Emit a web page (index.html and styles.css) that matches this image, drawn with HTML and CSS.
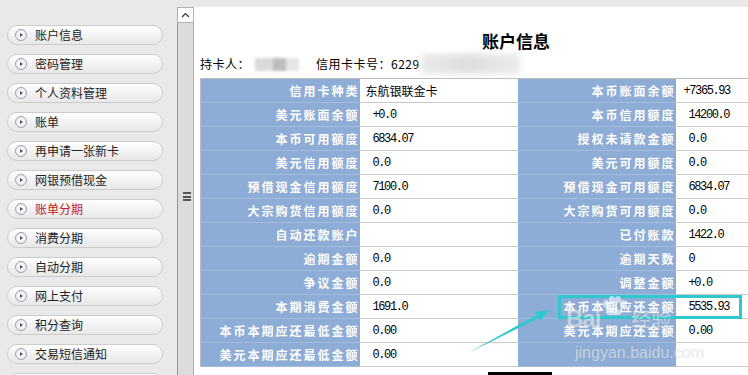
FILE: index.html
```html
<!DOCTYPE html>
<html>
<head>
    <link rel="stylesheet" href="styles.css">
</head>
<body>
    <div class="page">
        <div class="sidebar">
            <div class="menu-item"><span class="dot"></span>账户信息</div>
            <div class="menu-item"><span class="dot"></span>密码管理</div>
            <div class="menu-item"><span class="dot"></span>个人资料管理</div>
            <div class="menu-item"><span class="dot"></span>账单</div>
            <div class="menu-item"><span class="dot"></span>再申请一张新卡</div>
            <div class="menu-item"><span class="dot"></span>网银预借现金</div>
            <div class="menu-item active"><span class="dot"></span>账单分期</div>
            <div class="menu-item"><span class="dot"></span>消费分期</div>
            <div class="menu-item"><span class="dot"></span>自动分期</div>
            <div class="menu-item"><span class="dot"></span>网上支付</div>
            <div class="menu-item"><span class="dot"></span>积分查询</div>
            <div class="menu-item"><span class="dot"></span>交易短信通知</div>
            <div class="menu-item"><span class="dot"></span></div>
        </div>
        <div class="gutter">
            <div class="scroll-up">
                <svg width="9" height="6" viewBox="0 0 9 6"><path d="M1 5 L4.5 1.5 L8 5" fill="none" stroke="#333" stroke-width="1.2"/></svg>
            </div>
            <div class="grip"><span></span><span></span><span></span></div>
        </div>
        <div class="content">
            <div class="title">账户信息</div>
            <div class="holder">
                <span>持卡人：</span><span class="blur-name"></span><span class="card-no">信用卡卡号：6229</span><span class="blur-num"></span>
            </div>
            <table class="info">
                <colgroup>
                    <col style="width: 159px"><col style="width: 158px"><col style="width: 158px"><col style="width: 157px">
                </colgroup>
                <tr><td class="lbl">信用卡种类</td><td class="val">东航银联金卡</td><td class="lbl">本币账面余额</td><td class="val num first">+7365.93</td></tr>
                <tr><td class="lbl">美元账面余额</td><td class="val num">+0.0</td><td class="lbl">本币信用额度</td><td class="val num">14200.0</td></tr>
                <tr><td class="lbl">本币可用额度</td><td class="val num">6834.07</td><td class="lbl">授权未请款金额</td><td class="val num">0.0</td></tr>
                <tr><td class="lbl">美元信用额度</td><td class="val num">0.0</td><td class="lbl">美元可用额度</td><td class="val num">0.0</td></tr>
                <tr><td class="lbl">预借现金信用额度</td><td class="val num">7100.0</td><td class="lbl">预借现金可用额度</td><td class="val num">6834.07</td></tr>
                <tr><td class="lbl">大宗购货信用额度</td><td class="val num">0.0</td><td class="lbl">大宗购货可用额度</td><td class="val num">0.0</td></tr>
                <tr><td class="lbl">自动还款账户</td><td class="val"></td><td class="lbl">已付账款</td><td class="val num">1422.0</td></tr>
                <tr><td class="lbl">逾期金额</td><td class="val num">0.0</td><td class="lbl">逾期天数</td><td class="val num">0</td></tr>
                <tr><td class="lbl">争议金额</td><td class="val num">0.0</td><td class="lbl">调整金额</td><td class="val num">+0.0</td></tr>
                <tr><td class="lbl">本期消费金额</td><td class="val num">1691.0</td><td class="lbl">本币本期应还金额</td><td class="val num">5535.93</td></tr>
                <tr><td class="lbl">本币本期应还最低金额</td><td class="val num">0.00</td><td class="lbl">美元本期应还金额</td><td class="val num">0.00</td></tr>
                <tr><td class="lbl">美元本期应还最低金额</td><td class="val num">0.00</td><td class="lbl"></td><td class="val"></td></tr>
            </table>
        </div>
    </div>

    <div class="highlight"></div>
    <svg class="arrow" width="748" height="375" viewBox="0 0 748 375">
        <polygon points="468,353 538.4,318.1 539.9,320.9 550,310 535.3,312.1 536.8,314.9" fill="#2ec9cf"/>
    </svg>
    <div class="watermark">
        <div class="wm-logo"><span class="wm-bai">Bai</span><svg class="wm-paw" width="26" height="20" viewBox="0 0 26 20"><ellipse cx="5" cy="8" rx="3" ry="4"/><ellipse cx="11" cy="3.5" rx="3" ry="3.5"/><ellipse cx="17" cy="3.5" rx="3" ry="3.5"/><ellipse cx="22" cy="8" rx="3" ry="4"/><path d="M8 19 C4 19 6 13 13 11 C20 13 22 19 18 19 Z"/></svg><span class="wm-jy">经验</span></div>
        <div class="wm-url">jingyan.baidu.com</div>
    </div>
    <div class="hbar"></div>
</body>
</html>
```

FILE: styles.css
```css
body {
    margin: 0;
    background-color: rgb(233, 233, 233);
    font-family: "Noto Sans CJK SC", "Noto Sans", sans-serif;
    overflow: hidden;
    width: 748px;
    height: 375px;
    position: relative;
}
.page {
    display: flex;
    height: 375px;
}
.sidebar {
    width: 177px;
    flex: none;
    padding-top: 25px;
    box-sizing: border-box;
}
.menu-item {
    display: flex;
    align-items: center;
    margin-left: 7px;
    margin-bottom: 9px;
    width: 156px;
    height: 20px;
    box-sizing: border-box;
    border: 1px solid rgb(204, 204, 204);
    border-radius: 10px;
    background: linear-gradient(rgb(255, 255, 255), rgb(240, 240, 240) 60%, rgb(232, 232, 232));
    font-size: 12px;
    line-height: 18px;
    color: rgb(34, 34, 34);
}
.menu-item.active {
    color: rgb(196, 32, 38);
}
.dot {
    position: relative;
    width: 10px;
    height: 10px;
    margin-left: 7px;
    margin-right: 8px;
    border: 1px solid rgb(160, 158, 180);
    border-radius: 50%;
    background: radial-gradient(rgb(255, 255, 255), rgb(230, 230, 236));
    flex: none;
}
.dot::after {
    content: "";
    position: absolute;
    left: 4px;
    top: 2.5px;
    border-left: 3px solid rgb(80, 80, 90);
    border-top: 2.5px solid transparent;
    border-bottom: 2.5px solid transparent;
}
.gutter {
    width: 17px;
    flex: none;
    margin-top: 7px;
    box-sizing: border-box;
    border-left: 1px solid rgb(150, 150, 150);
    border-right: 1px solid rgb(176, 176, 176);
    background-color: rgb(220, 220, 220);
}
.scroll-up {
    height: 16px;
    margin-left: -1px;
    margin-right: -1px;
    border: 1px solid rgb(176, 176, 176);
    box-sizing: border-box;
    background-color: rgb(255, 255, 255);
    display: flex;
    align-items: center;
    justify-content: center;
}
.grip {
    margin-top: 169px;
    margin-left: 5px;
    width: 8px;
}
.grip span {
    display: block;
    height: 2px;
    margin-bottom: 1.5px;
    background-color: rgb(85, 85, 85);
}
.content {
    width: 638px;
    flex: none;
    margin-top: 7px;
    background-color: rgb(255, 255, 255);
    padding-left: 6px;
    box-sizing: border-box;
}
.title {
    text-align: center;
    font-size: 17px;
    font-weight: bold;
    line-height: 20px;
    padding-top: 24px;
    color: rgb(0, 0, 0);
}
.holder {
    margin-top: 5px;
    height: 16px;
    font-size: 12px;
    line-height: 16px;
    display: flex;
    align-items: center;
    letter-spacing: 0.5px;
    color: rgb(0, 0, 0);
}
.blur-name {
    display: inline-block;
    width: 44px;
    height: 13px;
    margin-left: 5px;
    background: linear-gradient(90deg, rgb(218, 218, 218) 0, rgb(218, 218, 218) 40%, rgb(188, 188, 188) 40%, rgb(188, 188, 188) 70%, rgb(230, 230, 230) 70%);
    filter: blur(1.5px);
}
.card-no {
    margin-left: 17px;
}
.blur-num {
    display: inline-block;
    width: 98px;
    height: 20px;
    margin-left: 2px;
    background: linear-gradient(90deg, rgb(232, 232, 232), rgb(222, 222, 222) 50%, rgb(236, 236, 236));
    filter: blur(3px);
}
.info {
    margin-top: 6px;
    width: 632px;
    table-layout: fixed;
    border-collapse: collapse;
    border: 1px solid rgb(188, 188, 188);
}
.info td {
    height: 23px;
    padding: 0;
    font-size: 12px;
    white-space: nowrap;
    overflow: hidden;
}
.lbl {
    background-color: rgb(141, 173, 214);
    color: rgb(255, 255, 255);
    font-weight: bold;
    text-align: right;
    letter-spacing: 2px;
    border-bottom: 1px solid rgb(163, 189, 222);
}
.val {
    background-color: rgb(255, 255, 255);
    color: rgb(0, 0, 0);
    padding-left: 6px !important;
    border-bottom: 1px solid rgb(200, 200, 200);
}
.num {
    font-family: "Liberation Mono", monospace;
    letter-spacing: -1.4px;
    padding-left: 13px !important;
}
.num.first {
    padding-left: 8px !important;
}
.highlight {
    position: absolute;
    left: 558px;
    top: 295px;
    width: 184px;
    height: 24px;
    box-sizing: border-box;
    border: 3px solid rgb(46, 201, 207);
}
.arrow {
    position: absolute;
    left: 0;
    top: 0;
}
.watermark {
    position: absolute;
    left: 566px;
    top: 294px;
    color: rgba(255, 255, 255, 0.55);
    text-shadow: 0 0 1px rgba(120, 120, 120, 0.3);
}
.wm-logo {
    display: flex;
    align-items: flex-end;
    height: 38px;
}
.wm-bai {
    font-family: "Liberation Sans", sans-serif;
    font-weight: bold;
    font-size: 24px;
    line-height: 26px;
    letter-spacing: -1px;
}
.wm-paw {
    fill: rgba(255, 255, 255, 0.55);
    margin-bottom: 16px;
    margin-left: 1px;
}
.wm-jy {
    font-size: 20px;
    line-height: 26px;
    margin-left: 4px;
}
.wm-url {
    font-family: "Liberation Sans", sans-serif;
    font-size: 16px;
    line-height: 18px;
    margin-top: 12px;
    margin-left: 9px;
}
.hbar {
    position: absolute;
    left: 488px;
    top: 372px;
    width: 64px;
    height: 3px;
    background-color: rgb(0, 0, 0);
}
```
